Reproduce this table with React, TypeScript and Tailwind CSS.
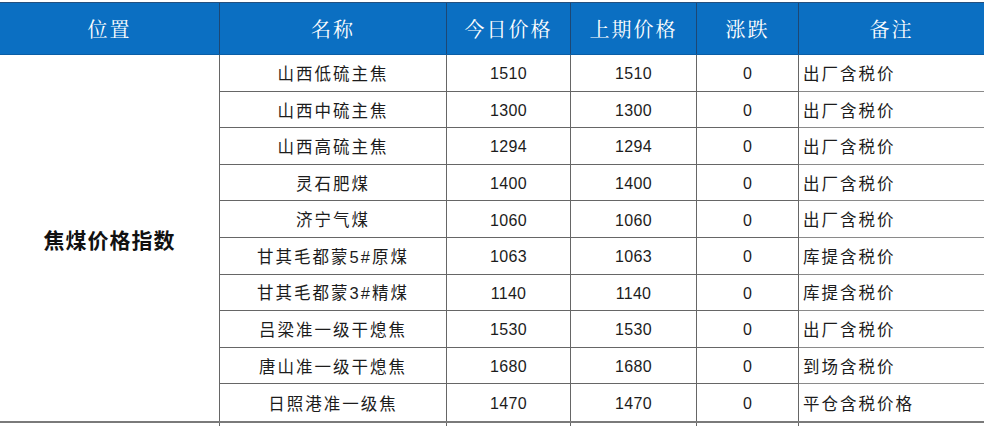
import React from "react";

type Row = {
  name: string;
  today: string;
  last: string;
  change: string;
  note: string;
};

const rows: Row[] = [
  { name: "山西低硫主焦", today: "1510", last: "1510", change: "0", note: "出厂含税价" },
  { name: "山西中硫主焦", today: "1300", last: "1300", change: "0", note: "出厂含税价" },
  { name: "山西高硫主焦", today: "1294", last: "1294", change: "0", note: "出厂含税价" },
  { name: "灵石肥煤", today: "1400", last: "1400", change: "0", note: "出厂含税价" },
  { name: "济宁气煤", today: "1060", last: "1060", change: "0", note: "出厂含税价" },
  { name: "甘其毛都蒙5#原煤", today: "1063", last: "1063", change: "0", note: "库提含税价" },
  { name: "甘其毛都蒙3#精煤", today: "1140", last: "1140", change: "0", note: "库提含税价" },
  { name: "吕梁准一级干熄焦", today: "1530", last: "1530", change: "0", note: "出厂含税价" },
  { name: "唐山准一级干熄焦", today: "1680", last: "1680", change: "0", note: "到场含税价" },
  { name: "日照港准一级焦", today: "1470", last: "1470", change: "0", note: "平仓含税价格" },
];

const headers = ["位置", "名称", "今日价格", "上期价格", "涨跌", "备注"];

const cjk = "font-['Liberation_Sans','Noto_Sans_CJK_SC',sans-serif]";
const cols = "grid grid-cols-[220px_227px_124px_126px_102px_185px]";

const App: React.FC = () => {
  return (
    <div className={`w-[984px] h-[426px] overflow-hidden bg-white pt-[2px] ${cjk}`}>
      {/* Header */}
      <div className={`${cols} h-[53px] bg-[#0b6fc2] border-t border-[#25507e] border-b border-b-[#0a5ea6]`}>
        {headers.map((h, i) => (
          <div
            key={h}
            className={`flex items-center justify-center text-white text-[20px] tracking-[2px] font-['Noto_Serif_CJK_SC','Noto_Sans_CJK_SC',serif] ${
              i < headers.length - 1 ? "border-r border-[#1d4774]" : ""
            }`}
          >
            {h}
          </div>
        ))}
      </div>

      {/* Body */}
      <div className={`${cols} border-b-2 border-[#7a7a7a]`}>
        <div className="row-span-10 flex items-center justify-center border-r border-[#666] pt-[6px]">
          <span className="text-[21px] font-bold tracking-[1px] text-[#111]">焦煤价格指数</span>
        </div>
        {rows.map((r, i) => {
          const last = i === rows.length - 1;
          const rowCls = `h-[36.6px] flex items-center pt-[3px] text-[#1c1c1c] ${
            last ? "" : "border-b border-[#8a8a8a]"
          }`;
          return (
            <React.Fragment key={r.name}>
              <div className={`${rowCls} justify-center border-r border-[#666] text-[16.5px] tracking-[2px]`}>
                {r.name}
              </div>
              <div className={`${rowCls} justify-center border-r border-[#666] text-[16px] tracking-[0.3px]`}>
                {r.today}
              </div>
              <div className={`${rowCls} justify-center border-r border-[#666] text-[16px] tracking-[0.3px]`}>
                {r.last}
              </div>
              <div className={`${rowCls} justify-center border-r border-[#666] text-[16px]`}>{r.change}</div>
              <div className={`${rowCls} pl-[4px] text-[16.5px] tracking-[2px]`}>{r.note}</div>
            </React.Fragment>
          );
        })}
      </div>

      {/* Start of next block */}
      <div className={`${cols} h-[10px]`}>
        <div className="border-r border-[#666]" />
        <div className="border-r border-[#666]" />
        <div className="border-r border-[#666]" />
        <div className="border-r border-[#666]" />
        <div className="border-r border-[#666]" />
        <div />
      </div>
    </div>
  );
};

export default App;
